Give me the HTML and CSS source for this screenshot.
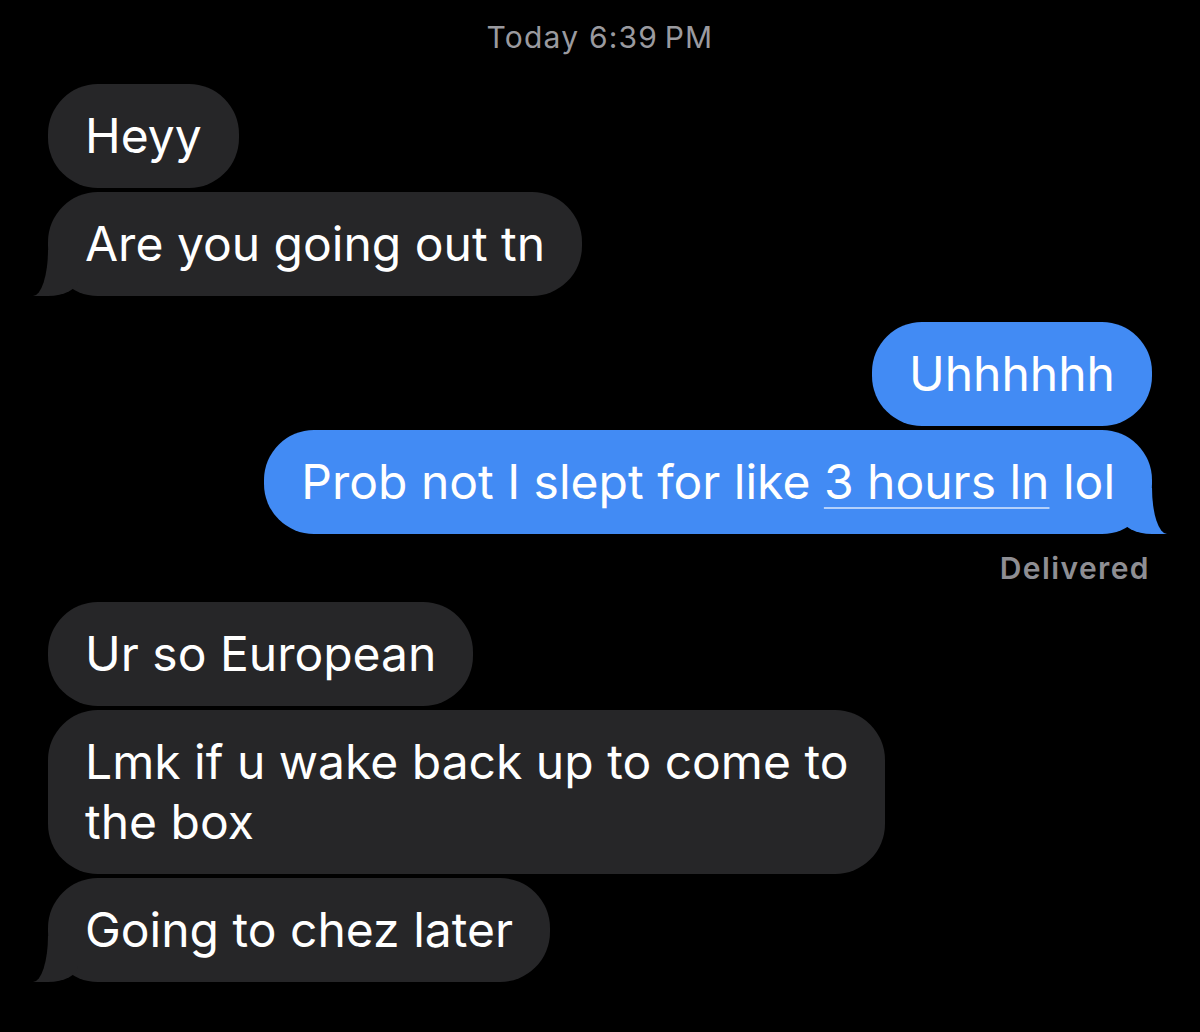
FILE: index.html
```html
<!DOCTYPE html>
<html>
  <head>
    <title>Messages</title>
    <link rel="stylesheet" href="styles.css">
  </head>
  <body>
    <div class="thread">
      <div class="stamp">Today 6:39&thinsp;PM</div>

      <div class="row them">
        <div class="bubble">Heyy</div>
      </div>
      <div class="row them tight">
        <div class="bubble tail">Are you going out tn</div>
      </div>

      <div class="row me group">
        <div class="bubble">Uhhhhhh</div>
      </div>
      <div class="row me tight">
        <div class="bubble tail">Prob not I slept for like <span class="link">3 hours ln</span> lol</div>
      </div>
      <div class="status">Delivered</div>

      <div class="row them">
        <div class="bubble">Ur so European</div>
      </div>
      <div class="row them tight">
        <div class="bubble">Lmk if u wake back up to come to<br>the box</div>
      </div>
      <div class="row them tight">
        <div class="bubble tail">Going to chez later</div>
      </div>
    </div>
  </body>
</html>
```

FILE: styles.css
```css
body {
  margin: 0;
  padding: 0;
  background: #000;
  font-family: Inter, "Noto Sans", sans-serif;
  color: #fff;
}

.thread {
  display: flex;
  flex-direction: column;
  padding: 18px 48px 0 48px;
}

.stamp {
  text-align: center;
  font-size: 30px;
  font-weight: 400;
  letter-spacing: 1.2px;
  color: #9a9a9f;
  line-height: 38px;
  margin-bottom: 28px;
}

.row {
  display: flex;
}

.row.tight {
  margin-top: 4px;
}

.row.group {
  margin-top: 26px;
}

.them {
  justify-content: flex-start;
}

.me {
  justify-content: flex-end;
}

.bubble {
  position: relative;
  font-size: 48px;
  line-height: 60px;
  padding: 22px 37px;
  border-radius: 50px;
  background: #262628;
}

.me .bubble {
  background: #428bf4;
}

/* tail: coloured block, then a black block carves the curve */
.bubble.tail::before,
.bubble.tail::after {
  content: "";
  position: absolute;
  bottom: 0;
  height: 46px;
}

.them .bubble.tail::before {
  left: -15px;
  width: 45px;
  background: #262628;
  border-bottom-right-radius: 30px 16px;
}

.them .bubble.tail::after {
  left: -45px;
  width: 45px;
  background: #000;
  border-bottom-right-radius: 15px 46px;
}

.me .bubble.tail::before {
  right: -15px;
  width: 45px;
  background: #428bf4;
  border-bottom-left-radius: 30px 16px;
}

.me .bubble.tail::after {
  right: -45px;
  width: 45px;
  background: #000;
  border-bottom-left-radius: 15px 46px;
}

.link {
  text-decoration: underline;
  text-decoration-color: rgba(255, 255, 255, 0.6);
  text-decoration-thickness: 2px;
  text-underline-offset: 8px;
}

.status {
  align-self: flex-end;
  font-size: 30px;
  font-weight: 600;
  letter-spacing: 1.4px;
  color: #8e8e93;
  line-height: 34px;
  margin: 17px 2px 17px 0;
}
```
